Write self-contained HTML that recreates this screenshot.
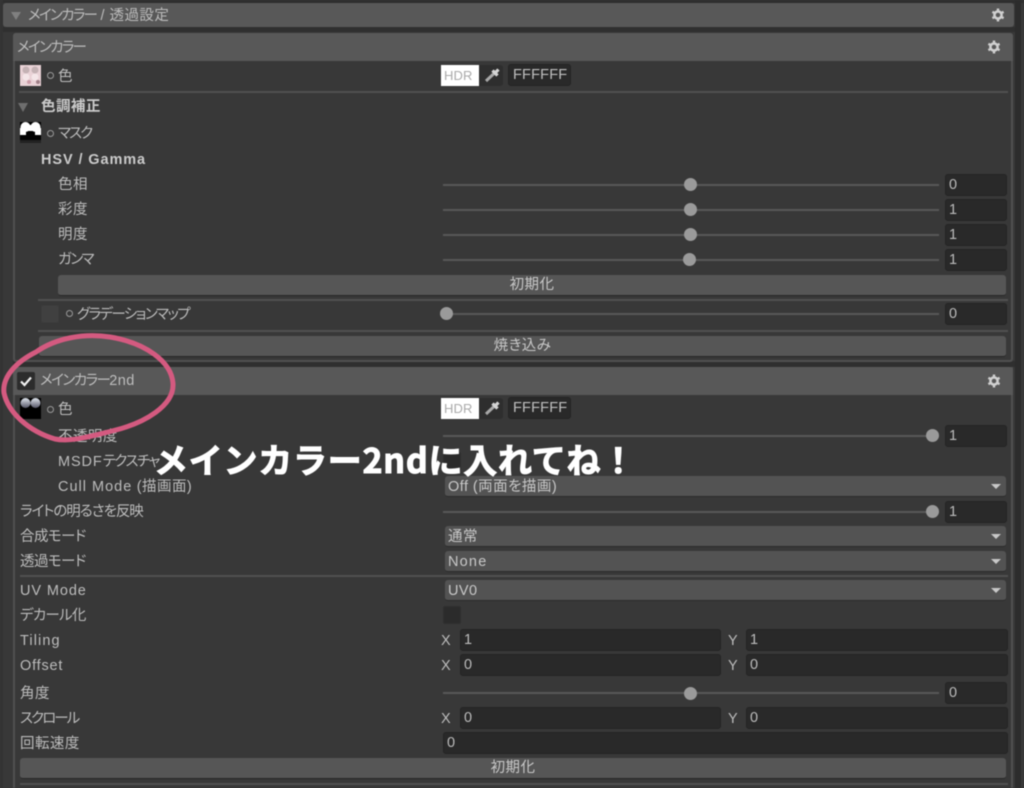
<!DOCTYPE html>
<html lang="ja"><head><meta charset="utf-8"><title>メインカラー</title>
<style>
html,body{margin:0;padding:0;background:#383838}
#p{position:relative;width:1024px;height:788px;overflow:hidden;background:#383838;font-family:"Liberation Sans","Noto Sans CJK JP",sans-serif;font-size:14.5px;color:#bcbcbc;letter-spacing:.45px;font-feature-settings:"palt";filter:blur(.4px)}
#p div{position:absolute;box-sizing:border-box}
.t{height:20px;line-height:20px;white-space:nowrap;margin-top:1px}
.b{font-weight:bold;color:#cbcbcb}
.h{background:#585858;border-radius:3px 3px 0 0}
.sep{height:2px;background:#505050}
.track{height:2px;background:#585858}
.knob{width:13px;height:13px;border-radius:50%;background:#9a9a9a}
.f{height:22px;background:#292929;border:1px solid #242424;border-radius:3px;line-height:21px;padding-left:3px;color:#bcbcbc}
.btn{height:21px;background:#565656;border-bottom:1px solid #272727;border-radius:3px;text-align:center;line-height:21px;color:#c8c8c8}
.dd{height:21px;left:445px;width:561px;background:#535353;border-bottom:1px solid #2a2a2a;border-radius:3px;line-height:22px;padding-left:3px;color:#c8c8c8}
.dd:after{content:"";position:absolute;right:5px;top:8px;border-left:5px solid transparent;border-right:5px solid transparent;border-top:5px solid #c8c8c8}
.cb{width:18px;height:18px;background:#2b2b2b;border:1px solid #303030;border-radius:2px}
.o{width:7px;height:7px;border:1px solid #999;border-radius:50%}
</style></head><body><div id="p">
<div style="left:0;top:0;width:1024px;height:3px;background:#2e2e2e"></div>
<div style="left:1015px;top:0;width:6px;height:788px;background:#2c2c2c"></div>
<div style="left:0;top:27px;width:1015px;height:5px;background:#2f2f2f"></div>
<div style="left:0;top:0;width:3px;height:788px;background:#333"></div>
<div style="left:13px;top:361px;width:1002px;height:6px;background:#2f2f2f"></div>

<div style="left:3px;top:3px;width:1011px;height:24px;background:#585858;border-radius:3px"></div>
<div style="left:11px;top:12px;width:0;height:0;border-left:5px solid transparent;border-right:5px solid transparent;border-top:8px solid #808080"></div>
<div class="t" style="left:28px;top:5px;color:#bcbcbc"><span style="letter-spacing:-1.75px">メインカラー</span> / 透過設定</div>
<svg style="position:absolute;left:991px;top:8px" width="14" height="14" viewBox="0 0 14 14"><circle cx="7" cy="7" r="3.6" fill="none" stroke="#cfcfcf" stroke-width="2.6"/><path d="M7 0.5V3M7 11V13.5M1.4 3.8L3.5 5M10.5 9L12.6 10.2M1.4 10.2L3.5 9M10.5 5L12.6 3.8" stroke="#cfcfcf" stroke-width="2.4"/></svg>

<div style="left:13px;top:33px;width:1000px;height:329px;border:2px solid #505050;border-top:0;border-radius:3px"></div>
<div class="h" style="left:13px;top:33px;width:1000px;height:28px"></div>
<div class="t" style="left:17px;top:37px;letter-spacing:-1.75px">メインカラー</div>
<svg style="position:absolute;left:987px;top:40px" width="14" height="14" viewBox="0 0 14 14"><circle cx="7" cy="7" r="3.6" fill="none" stroke="#cfcfcf" stroke-width="2.6"/><path d="M7 0.5V3M7 11V13.5M1.4 3.8L3.5 5M10.5 9L12.6 10.2M1.4 10.2L3.5 9M10.5 5L12.6 3.8" stroke="#cfcfcf" stroke-width="2.4"/></svg>

<svg style="position:absolute;left:20px;top:65px" width="21" height="21" viewBox="0 0 21 21"><rect width="21" height="21" fill="#e9d2d6"/><circle cx="6" cy="5" r="3.5" fill="#c4b2b4"/><circle cx="15" cy="5" r="3.5" fill="#c4b2b4"/><circle cx="6" cy="12" r="3.5" fill="#f4e6e8"/><circle cx="15" cy="12" r="3.5" fill="#f4e6e8"/><circle cx="18" cy="17" r="2" fill="#a08088"/><circle cx="9" cy="17" r="2" fill="#cc9ca8"/></svg>
<div class="o" style="left:47px;top:72px"></div>
<div class="t" style="left:58px;top:66px">色</div>
<div style="left:441px;top:65px;width:38px;height:21px;background:#fff"></div>
<div class="t" style="left:444px;top:65px;color:#aaa;font-size:13px;letter-spacing:.1px">HDR</div>
<div style="left:479px;top:65px;width:24px;height:21px;background:#2e2e2e;border-radius:0 3px 3px 0"></div>
<svg style="position:absolute;left:484px;top:67px" width="17" height="17" viewBox="0 0 17 17"><path d="M2 14L10 6.5" stroke="#a8a8a8" stroke-width="3"/><path d="M8.5 3.5L13.5 8.5M11 6L14.5 2.5" stroke="#d4d4d4" stroke-width="3.2"/></svg>
<div class="f" style="left:508px;top:64px;width:63px;padding-left:4px;color:#c0c0c0;letter-spacing:.2px">FFFFFF</div>
<div class="sep" style="left:19px;top:91px;width:989px"></div>

<div style="left:18px;top:103px;width:0;height:0;border-left:5.5px solid transparent;border-right:5.5px solid transparent;border-top:9px solid #6e6e6e"></div>
<div class="t b" style="left:41px;top:96px">色調補正</div>

<svg style="position:absolute;left:20px;top:122px" width="21" height="21" viewBox="0 0 21 21"><rect width="21" height="21" fill="#000"/><circle cx="5.5" cy="5" r="5" fill="#fff"/><circle cx="15.5" cy="5" r="5" fill="#fff"/><rect x="0" y="6" width="6" height="7" fill="#fff"/><rect x="15" y="6" width="6" height="7" fill="#fff"/><rect x="8" y="3" width="5" height="6" fill="#fff"/><rect y="18" width="21" height="3" fill="#222"/></svg>
<div class="o" style="left:47px;top:130px"></div>
<div class="t" style="left:58px;top:123px;letter-spacing:-1.9px">マスク</div>

<div class="t b" style="left:41px;top:149px;letter-spacing:.9px">HSV / Gamma</div>

<div class="t" style="left:58px;top:174px">色相</div>
<div class="track" style="left:443px;top:184px;width:496px"></div><div class="knob" style="left:684px;top:178px"></div>
<div class="f" style="left:945px;top:174px;width:62px">0</div>
<div class="t" style="left:58px;top:199px">彩度</div>
<div class="track" style="left:443px;top:209px;width:496px"></div><div class="knob" style="left:684px;top:203px"></div>
<div class="f" style="left:945px;top:199px;width:62px">1</div>
<div class="t" style="left:58px;top:224px">明度</div>
<div class="track" style="left:443px;top:234px;width:496px"></div><div class="knob" style="left:684px;top:228px"></div>
<div class="f" style="left:945px;top:224px;width:62px">1</div>
<div class="t" style="left:58px;top:249px;letter-spacing:-1.55px">ガンマ</div>
<div class="track" style="left:443px;top:259px;width:496px"></div><div class="knob" style="left:683px;top:253px"></div>
<div class="f" style="left:945px;top:249px;width:62px">1</div>
<div class="btn" style="left:58px;top:275px;width:948px">初期化</div>
<div class="sep" style="left:38px;top:299px;width:970px"></div>
<div class="cb" style="left:41px;top:305px;background:#404040;border-color:#3c3c3c"></div>
<div class="o" style="left:66px;top:310px"></div>
<div class="t" style="left:77px;top:304px;letter-spacing:-1.6px">グラデーションマップ</div>
<div class="track" style="left:443px;top:313px;width:496px"></div><div class="knob" style="left:440px;top:307px"></div>
<div class="f" style="left:945px;top:303px;width:62px">0</div>
<div class="sep" style="left:38px;top:330px;width:970px"></div>
<div class="btn" style="left:39px;top:336px;width:967px">焼き込み</div>

<div style="left:13px;top:367px;width:1000px;height:430px;border:2px solid #505050;border-top:0"></div>
<div class="h" style="left:13px;top:367px;width:1000px;height:28px"></div>
<div style="left:17px;top:372px;width:18px;height:18px;background:#2c2c2c;border-radius:2px"></div>
<svg style="position:absolute;left:19px;top:374px" width="14" height="14" viewBox="0 0 14 14"><path d="M2 7.5L5.5 11L12 3.5" fill="none" stroke="#f0f0f0" stroke-width="2.2"/></svg>
<div class="t" style="left:40px;top:370px;color:#bdbdbd"><span style="letter-spacing:-1.55px">メインカラー</span>2nd</div>
<svg style="position:absolute;left:987px;top:374px" width="14" height="14" viewBox="0 0 14 14"><circle cx="7" cy="7" r="3.6" fill="none" stroke="#cfcfcf" stroke-width="2.6"/><path d="M7 0.5V3M7 11V13.5M1.4 3.8L3.5 5M10.5 9L12.6 10.2M1.4 10.2L3.5 9M10.5 5L12.6 3.8" stroke="#cfcfcf" stroke-width="2.4"/></svg>

<svg style="position:absolute;left:20px;top:398px" width="21" height="21" viewBox="0 0 21 21"><defs><linearGradient id="g" x1="0" y1="0" x2="0" y2="1"><stop offset="0" stop-color="#e0e6ee"/><stop offset="1" stop-color="#556"/></linearGradient></defs><rect width="21" height="21" fill="#000"/><circle cx="5.5" cy="5" r="5" fill="url(#g)"/><circle cx="15.5" cy="5" r="5" fill="url(#g)"/></svg>
<div class="o" style="left:47px;top:406px"></div>
<div class="t" style="left:58px;top:399px">色</div>
<div style="left:441px;top:398px;width:38px;height:21px;background:#fff"></div>
<div class="t" style="left:444px;top:398px;color:#aaa;font-size:13px;letter-spacing:.1px">HDR</div>
<div style="left:479px;top:398px;width:24px;height:21px;background:#2e2e2e;border-radius:0 3px 3px 0"></div>
<svg style="position:absolute;left:484px;top:400px" width="17" height="17" viewBox="0 0 17 17"><path d="M2 14L10 6.5" stroke="#a8a8a8" stroke-width="3"/><path d="M8.5 3.5L13.5 8.5M11 6L14.5 2.5" stroke="#d4d4d4" stroke-width="3.2"/></svg>
<div class="f" style="left:508px;top:397px;width:63px;padding-left:4px;color:#c0c0c0;letter-spacing:.2px">FFFFFF</div>

<div class="t" style="left:58px;top:426px">不透明度</div>
<div class="track" style="left:443px;top:435px;width:496px"></div><div class="knob" style="left:926px;top:429px"></div>
<div class="f" style="left:945px;top:425px;width:62px">1</div>
<div class="t" style="left:58px;top:451px;letter-spacing:.9px">MSDF<span style="letter-spacing:-1.5px">テクスチャ</span></div>
<div class="cb" style="left:443px;top:452px"></div>
<div class="t" style="left:58px;top:476px"><span style="letter-spacing:1px">Cull Mode</span> (描画面)</div>
<div class="dd" style="top:476px">Off (両面を描画)</div>
<div class="t" style="left:20px;top:501px;letter-spacing:-1.05px">ライトの明るさを反映</div>
<div class="track" style="left:443px;top:511px;width:496px"></div><div class="knob" style="left:926px;top:505px"></div>
<div class="f" style="left:945px;top:501px;width:62px">1</div>
<div class="t" style="left:20px;top:526px;letter-spacing:-.55px">合成モード</div>
<div class="dd" style="top:526px">通常</div>
<div class="t" style="left:20px;top:551px;letter-spacing:-.55px">透過モード</div>
<div class="dd" style="top:551px;letter-spacing:1.2px">None</div>
<div class="sep" style="left:20px;top:575px;width:988px"></div>
<div class="t" style="left:20px;top:580px;letter-spacing:.9px">UV Mode</div>
<div class="dd" style="top:580px">UV0</div>
<div class="t" style="left:20px;top:605px;letter-spacing:-.75px">デカール化</div>
<div class="cb" style="left:443px;top:606px"></div>
<div class="t" style="left:20px;top:630px;letter-spacing:1.1px">Tiling</div>
<div class="t" style="left:441px;top:630px">X</div>
<div class="f" style="left:460px;top:629px;width:261px">1</div>
<div class="t" style="left:728px;top:630px">Y</div>
<div class="f" style="left:746px;top:629px;width:262px">1</div>
<div class="t" style="left:20px;top:655px;letter-spacing:.8px">Offset</div>
<div class="t" style="left:441px;top:655px">X</div>
<div class="f" style="left:460px;top:654px;width:261px">0</div>
<div class="t" style="left:728px;top:655px">Y</div>
<div class="f" style="left:746px;top:654px;width:262px">0</div>
<div class="t" style="left:20px;top:683px">角度</div>
<div class="track" style="left:443px;top:692px;width:496px"></div><div class="knob" style="left:684px;top:687px"></div>
<div class="f" style="left:945px;top:682px;width:62px">0</div>
<div class="t" style="left:20px;top:708px;letter-spacing:-1.95px">スクロール</div>
<div class="t" style="left:441px;top:708px">X</div>
<div class="f" style="left:460px;top:707px;width:261px">0</div>
<div class="t" style="left:728px;top:708px">Y</div>
<div class="f" style="left:746px;top:707px;width:262px">0</div>
<div class="t" style="left:20px;top:733px">回転速度</div>
<div class="f" style="left:443px;top:732px;width:565px">0</div>
<div class="btn" style="left:20px;top:758px;width:986px">初期化</div>
<div class="sep" style="left:20px;top:783px;width:988px"></div>

<svg style="position:absolute;left:0;top:320px" width="190" height="130" viewBox="0 320 190 130"><path d="M36 352C56 338 84 333 110 337C146 343 172 362 173 384C174 405 146 423 112 431C88 437 70 442 55 439C28 431 8 412 4 393C2 377 16 362 36 352" fill="none" stroke="#d45a80" stroke-width="5" stroke-linecap="round"/></svg>
<div style="left:154px;top:435px;height:48px;line-height:48px;white-space:nowrap;font-family:'Noto Sans CJK JP','Liberation Sans',sans-serif;font-weight:bold;font-size:34px;letter-spacing:.75px;color:#fff;-webkit-text-stroke:1px #fff;font-feature-settings:normal">メインカラー2ndに入れてね！</div>
</div></body></html>
